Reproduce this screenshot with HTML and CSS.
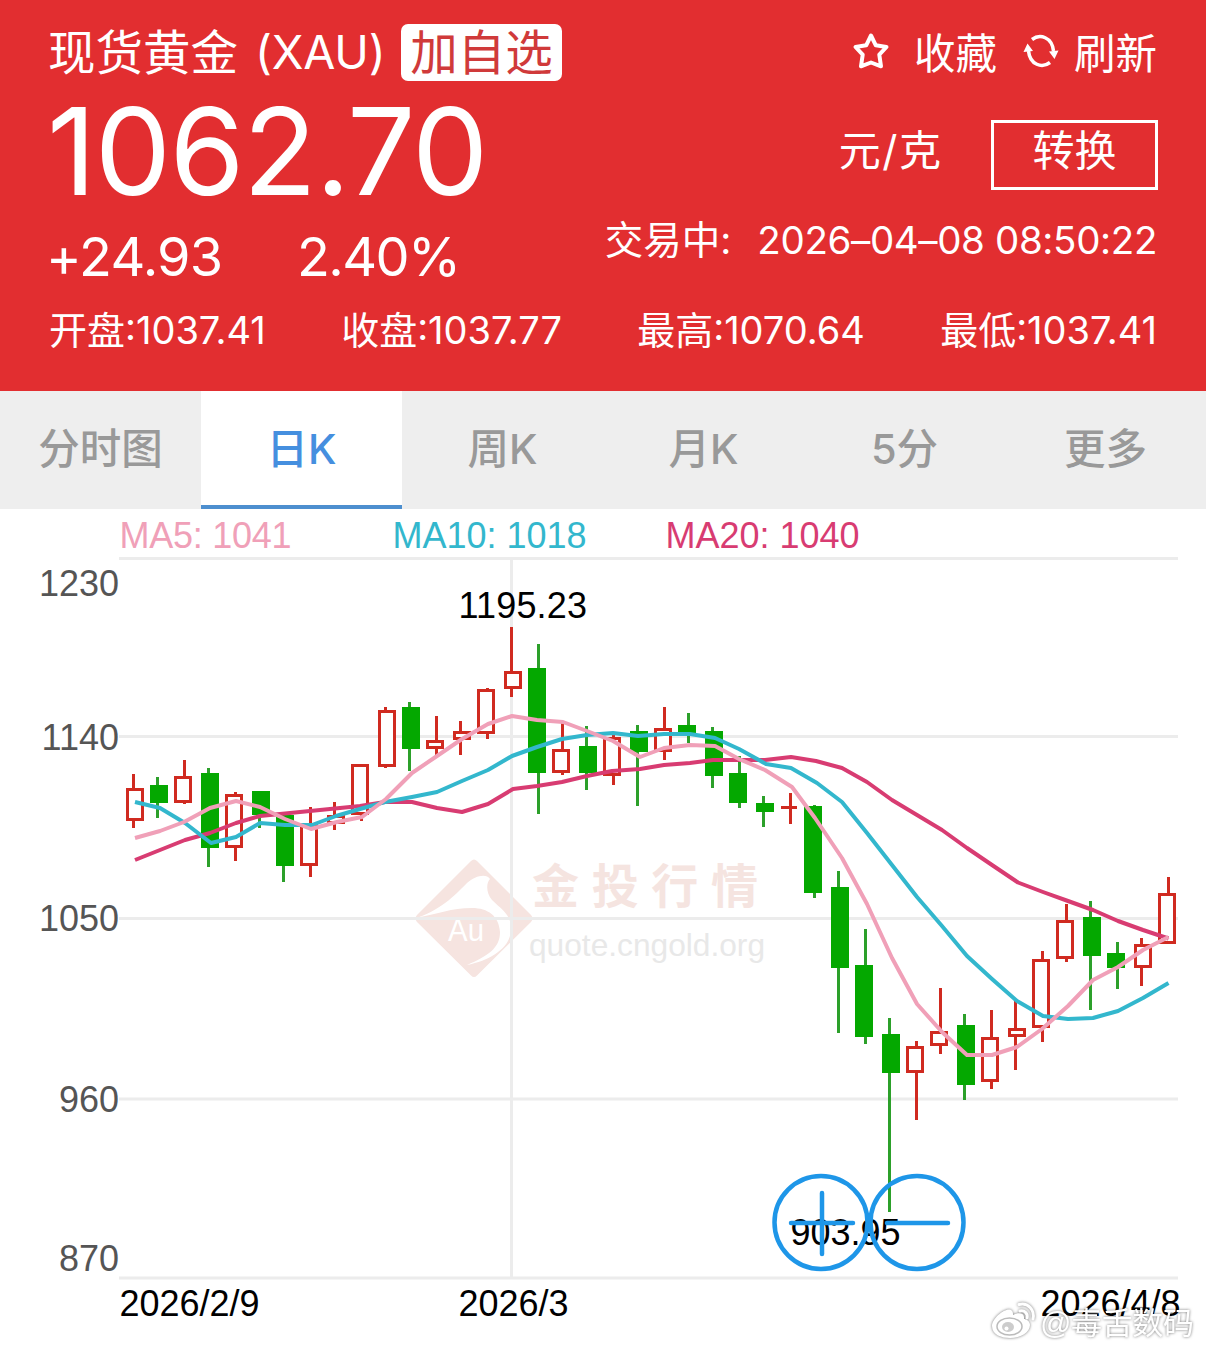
FILE: index.html
```html
<!DOCTYPE html>
<html lang="zh-CN">
<head>
<meta charset="utf-8">
<title>现货黄金 (XAU)</title>
<link rel="stylesheet" href="styles.css">
</head>
<body>
<header class="quote">
  <div class="quote-main">
    <div class="quote-left">
      <div class="title-row"><span class="title-cn">现货黄金</span><span class="title-code">(XAU)</span><button class="add">加自选</button></div>
      <div class="price">1062.70</div>
      <div class="change-row"><span class="change">+24.93</span><span class="percent">2.40%</span></div>
    </div>
    <div class="quote-right">
      <div class="actions">
        <svg class="star" viewBox="0 0 40 40"><path d="M20 4.500 24.800 14.300 35.500 16 28.300 23.700 30 35.300 20 31.500 10 35.300 11.700 23.700 4.500 16 15.200 14.300Z"/></svg>
        <span class="fav">收藏</span>
        <svg class="refresh" viewBox="0 0 36 34"><path class="arc" d="M9 5.500C17-0.500 29 3 30.500 17M27 28.500C19 34.500 7 31 5.500 17"/><path class="tip" d="M26 17.500 35.500 16.500 31.500 25ZM0.500 18 4.500 9.500 10 17Z"/></svg>
        <span class="reload">刷新</span>
      </div>
      <div class="unit-row"><span class="unit">元<span class="slash">/</span>克</span><button class="convert">转换</button></div>
      <div class="time-row"><span class="state">交易中:</span><span class="time">2026–04–08 08:50:22</span></div>
    </div>
  </div>
  <div class="stats">
    <span class="stat">开盘:<b>1037.41</b></span>
    <span class="stat">收盘:<b>1037.77</b></span>
    <span class="stat">最高:<b>1070.64</b></span>
    <span class="stat">最低:<b>1037.41</b></span>
  </div>
</header>
<nav class="tabs">
  <a class="tab">分时图</a><a class="tab active">日K</a><a class="tab">周K</a><a class="tab">月K</a><a class="tab">5分</a><a class="tab">更多</a>
</nav>
<main>
<svg class="chart" viewBox="0 509 1206 841">
  <g class="brand">
    <path class="brand-shape" d="M471 861Q474 858 477 861L531 915Q534 918.500 531 922L477 975.500Q474 978.500 471 975.500L417 922Q414 918.500 417 915Z"/>
    <path class="brand-cut" d="M418 917.500C444 908 457 893 467 883C475 876 486 873 490 879C486 883 486 893 492 900C502 910 511 914 511 929C511 947 492 960 467 965C488 956 500 948 500 932C499 916 488 908 472 908C451 908 438 914 418 917.500Z"/>
    <text class="brand-au" x="448" y="941" textLength="36" lengthAdjust="spacingAndGlyphs">Au</text>
    <text class="brand-cn" x="532" y="903" textLength="226">金投行情</text>
    <text class="brand-url" x="529" y="956" textLength="236" lengthAdjust="spacingAndGlyphs">quote.cngold.org</text>
  </g>
  <path class="grid" d="M119 558.500H1178M119 736.500H1178M119 918.500H1178M119 1099H1178M119 1278H1178M511.500 560V1277"/>
  <g class="legend">
    <text class="ma5" x="119.500" y="548" textLength="172">MA5: 1041</text>
    <text class="ma10" x="392.500" y="548">MA10: 1018</text>
    <text class="ma20" x="665.500" y="548">MA20: 1040</text>
  </g>
  <g class="axis-y">
    <text x="119" y="596">1230</text><text x="119" y="750">1140</text><text x="119" y="931">1050</text><text x="119" y="1112">960</text><text x="119" y="1271">870</text>
  </g>
  <g class="axis-x">
    <text x="119.500" y="1316">2026/2/9</text><text x="458.500" y="1316">2026/3</text><text x="1040.500" y="1316">2026/4/8</text>
  </g>
  <path class="wick up" d="M133.500 774V828M184.500 760V804M235.500 792V861M310.500 807V877M334.500 802V830M361.500 764V821M385.500 707V768M436.500 716V755M460.500 721V755M487.500 688V739M511.500 627V697M562.500 722V775M613.500 734V785M664.500 707V760M790.500 793V824M781 807.500H797M916.500 1041V1120M940.500 988V1054M991.500 1010V1089M1015.500 1001V1070M1042.500 951V1042M1066.500 904V962M1141.500 938V986M1168.500 877V944"/>
  <path class="wick down" d="M157.500 777V818M208.500 768V867M259.500 791V828M283.500 815V882M409.500 702V771M538.500 644V814M586.500 726V790M637.500 725V806M688.500 713V743M712.500 727V788M739.500 756V808M763.500 796V827M814.500 805V898M838.500 871V1033M865.500 929V1044M889.500 1018V1212M964.500 1014V1100M1090.500 901V1010M1117.500 942V989"/>
  <path class="body-up" d="M127.500 789.500h15v30h-15zM175.500 777.500h15v24h-15zM226.500 795.500h15v51h-15zM301.500 825.500h15v39h-15zM328.500 816.500h15v6h-15zM352.500 765.500h15v48h-15zM379.500 711.500h15v54h-15zM427.500 741.500h15v6h-15zM454.500 732.500h15v6h-15zM478.500 690.500h15v42h-15zM505.500 672.500h15v15h-15zM553.500 750.500h15v21h-15zM604.500 738.500h15v36h-15zM655.500 729.500h15v21h-15zM907.500 1047.500h15v24h-15zM931.500 1032.500h15v12h-15zM982.500 1038.500h15v42h-15zM1009.500 1029.500h15v6h-15zM1033.500 960.500h15v66h-15zM1057.500 921.500h15v36h-15zM1135.500 945.500h15v21h-15zM1159.500 894.500h15v48h-15z"/>
  <path class="body-down" d="M150 785h18v18h-18zM201 773h18v75h-18zM252 791h18v24h-18zM276 815h18v51h-18zM402 707h18v42h-18zM528 668h18v105h-18zM579 746h18v27h-18zM630 731h18v21h-18zM678 725h18v10h-18zM705 731h18v45h-18zM729 773h18v30h-18zM756 803h18v9h-18zM804 806h18v87h-18zM831 887h18v81h-18zM855 965h18v72h-18zM882 1034h18v39h-18zM957 1025h18v60h-18zM1083 917h18v39h-18zM1107 953h18v15h-18z"/>
  <polyline class="line l20" points="135,860 185,840 210,833 236,823 260,816 310,811 360,806 385,802 412,802 437,808 462,812 488,804 513,789 537,786 562,782 587,776 612,771 640,769 664,765 690,763 713,760 765,760 791,757 816,761 842,768 867,782 892,800 917,815 942,830 967,848 992,865 1018,882.500 1043,892 1068,901 1093,910 1118,921 1143,930 1168.500,938.500"/>
  <polyline class="line l10" points="135,802 160,808 185,823 211,843 236,837 260,823 285,825 312,825 336,816 360,809 385,802 412,797 437,792 462,781 488,770 512,756 537,747 562,739 587,735 613,733 638,736 664,734 690,734 715,738 739,749 766,764 791,768 817,783 842,802 867,833 892,865 917,897 942,926 967,956 992,979 1017,1001 1043,1016 1068,1019 1093,1018 1118,1011 1143,998 1168.500,983"/>
  <polyline class="line l5" points="135,838 160,831 184,822 210,808 236,801 260,807 285,819 311,829 337,822 362,817 386,799 412,773 437,756 462,739 488,724 512,716 537,720 563,722 587,731 613,741 640,757 664,748 690,745 715,746 739,759 765,770 792,787 815,818 842,858 867,904 892,958 917,1004 942,1032 967,1055 992,1055 1017,1047 1042,1029 1068,1006 1093,980 1118,967 1143,950 1168.500,937"/>
  <g class="marks">
    <text x="458.500" y="618" textLength="128.500">1195.23</text><text x="790.500" y="1245">903.95</text>
  </g>
  <g class="zoom"><circle cx="821" cy="1222.500" r="46.500"/><circle cx="917" cy="1222.500" r="46.500"/><path d="M791 1223H853M822 1193V1254M887 1223H948"/></g>
  <g class="credit">
    <path d="M1011 1310C1006 1307 992 1318 992 1326C992 1335 1002 1338 1010 1338C1021 1338 1030 1332 1030 1325C1030 1321 1026 1319 1024 1319C1025 1313 1019 1312 1013 1315C1013 1313 1013 1311 1011 1310Z"/>
    <ellipse class="eye" cx="1009.500" cy="1326.500" rx="12.500" ry="8.500"/>
    <ellipse class="iris" cx="1008" cy="1327" rx="6" ry="5"/>
    <circle class="pupil" cx="1006.500" cy="1328.500" r="2"/>
    <path class="wave" d="M1020 1311C1025 1310 1028 1314 1027 1318M1019 1304.500C1028 1302 1035 1310 1033 1319"/>
    <text x="1040" y="1334" textLength="154">@毒舌数码</text>
  </g>
</svg>
</main>
</body>
</html>
```

FILE: styles.css
```css
* { box-sizing: border-box; }
body {
  margin: 0;
  width: 1206px;
  background: #fff;
  font-family: Inter, "Noto Sans CJK SC", sans-serif;
}
button {
  font: inherit;
  padding: 0;
  border: 0;
  background: none;
  color: inherit;
}
.quote {
  height: 391px;
  padding: 24px 49px 0 49px;
  background: #e22e30;
  color: #fff;
  white-space: nowrap;
}
.quote-main {
  display: flex;
  justify-content: space-between;
  height: 276px;
}
.title-row, .change-row, .actions, .unit-row, .time-row { display: flex; }
.title-row { width: 513px; height: 57px; line-height: 57px; font-size: 47.500px; }
.title-cn { margin-left: -1px; }
.title-code { margin-left: 17px; font-size: 46.500px; letter-spacing: -0.200px; }
.add {
  width: 161px;
  height: 57px;
  margin-left: auto;
  border-radius: 7px;
  background: #fff;
  color: #d03a3a;
}
.price {
  height: 122px;
  margin: 9px 0 0 -2px;
  line-height: 122px;
  font-size: 121px;
  letter-spacing: -1.500px;
}
.change-row { height: 60px; margin: 15px 0 0 -3px; line-height: 60px; font-size: 54px; letter-spacing: -0.800px; }
.change { width: 251px; }
.percent { letter-spacing: -1.600px; }
.quote-right { display: flex; flex-direction: column; align-items: flex-end; }
.actions { height: 60px; align-items: center; line-height: 60px; font-size: 41.500px; }
.star { width: 40px; height: 40px; margin-right: 23px; margin-bottom: 6px; }
.star path { fill: none; stroke: #fff; stroke-width: 4; stroke-linejoin: round; }
.refresh { width: 36px; height: 34px; margin: 0 15px 6px 26px; }
.arc { fill: none; stroke: #fff; stroke-width: 3.500; }
.tip { fill: #fff; }
.unit-row { height: 70px; margin: 36px -1px 0 0; line-height: 62px; font-size: 42px; }
.unit { margin-right: 50px; }
.slash { margin: 0 1.500px; }
.convert { width: 167px; height: 70px; border: 3px solid #fff; line-height: 56px; padding-bottom: 8px; }
.time-row { height: 56px; margin-top: 22px; line-height: 56px; font-size: 38.500px; }
.state { margin-right: 26px; }
.time { letter-spacing: -0.370px; }
.stats {
  display: flex;
  justify-content: space-between;
  height: 60px;
  line-height: 60px;
  font-size: 38px;
}
.stat b { font-weight: 400; }
.tabs { display: flex; height: 118px; background: #eee; }
.tab {
  flex: 1;
  height: 118px;
  line-height: 116px;
  text-align: center;
  font-size: 41.500px;
  font-weight: 500;
  color: #999;
}
.tab.active { background: #fff; color: #458fdf; border-bottom: 4px solid #4d8fcf; }
main { height: 841px; }
.chart { display: block; width: 1206px; height: 841px; font-family: "Liberation Sans", "Noto Sans CJK SC", sans-serif; font-size: 36px; }
.grid { stroke: #ececec; stroke-width: 3; }
.brand-shape { fill: #f6e4e0; }
.brand-cut, .brand-au { fill: #fff; }
.brand-au { font-size: 31px; }
.brand-cn { font-size: 47px; font-weight: 700; fill: #f5e4e0; }
.brand-url { font-size: 32px; fill: #e8e8e8; }
.ma5 { fill: #f0a0b8; }
.ma10 { fill: #33b7cd; }
.ma20 { fill: #d83c72; }
.axis-y text { text-anchor: end; fill: #555; }
.wick { stroke-width: 3; }
.up { stroke: #d02a20; }
.down { stroke: #2ca02a; }
.body-up { fill: #fff; stroke: #d02a20; stroke-width: 3; }
.body-down { fill: #04a800; }
.line { fill: none; stroke-width: 4; stroke-linejoin: round; }
.l5 { stroke: #f0a0b8; }
.l10 { stroke: #33b7cd; }
.l20 { stroke: #d83c72; }
.zoom { fill: none; stroke: #1e96e8; stroke-width: 4.500; stroke-linecap: round; }
.credit { fill: #fff; font-size: 31px; filter: drop-shadow(0 0 1.500px rgba(0, 0, 0, 0.550)); }
.credit .eye { fill: #fff; stroke: #bbb; stroke-width: 1.500; }
.credit .iris { fill: #ccc; }
.credit .pupil { fill: #fff; }
.credit .wave { fill: none; stroke: #fff; stroke-width: 3; stroke-linecap: round; }
```
